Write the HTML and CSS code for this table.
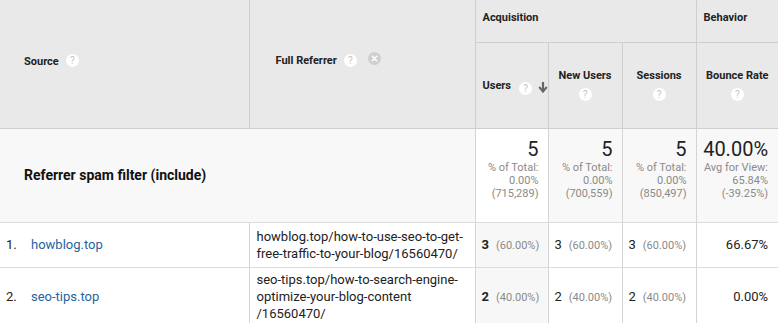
FILE: index.html
```html
<!DOCTYPE html>
<html>
<head>
<meta charset="utf-8">
<link rel="stylesheet" href="styles.css">
</head>
<body>
<table class="report">
  <colgroup>
    <col class="c-source">
    <col class="c-ref">
    <col class="c-users">
    <col class="c-new">
    <col class="c-sess">
    <col class="c-bounce">
  </colgroup>
  <thead>
    <tr class="group-row">
      <th class="dim" rowspan="2"><span class="hlabel">Source</span><span class="help">?</span></th>
      <th class="dim dim-ref" rowspan="2"><span class="hlabel">Full Referrer</span><span class="help">?</span><span class="remove"><svg width="13" height="13" viewBox="0 0 14 14"><circle cx="7" cy="7" r="7" fill="#cfcfcf"/><path d="M4.6 4.6 L9.4 9.4 M9.4 4.6 L4.6 9.4" stroke="#fff" stroke-width="1.6" stroke-linecap="round"/></svg></span></th>
      <th class="group" colspan="3">Acquisition</th>
      <th class="group">Behavior</th>
    </tr>
    <tr class="metric-row">
      <th class="metric sorted"><span class="inline"><span class="hlabel">Users</span><span class="help">?</span><svg class="arrow" width="10" height="12" viewBox="0 0 10 12"><path d="M5 1 V9.5" stroke="#666" stroke-width="2.2" fill="none"/><path d="M1.2 6 L5 10.6 L8.8 6" stroke="#666" stroke-width="2" fill="none" stroke-linejoin="miter"/></svg></span></th>
      <th class="metric"><div class="hlabel">New Users</div><span class="help">?</span></th>
      <th class="metric"><div class="hlabel">Sessions</div><span class="help">?</span></th>
      <th class="metric"><div class="hlabel">Bounce Rate</div><span class="help">?</span></th>
    </tr>
  </thead>
  <tbody>
    <tr class="summary">
      <td class="sum-label" colspan="2">Referrer spam filter (include)</td>
      <td class="sum sorted"><div class="big">5</div><div class="sub">% of Total:<br>0.00%<br>(715,289)</div></td>
      <td class="sum"><div class="big">5</div><div class="sub">% of Total:<br>0.00%<br>(700,559)</div></td>
      <td class="sum"><div class="big">5</div><div class="sub">% of Total:<br>0.00%<br>(850,497)</div></td>
      <td class="sum"><div class="big">40.00%</div><div class="sub">Avg for View:<br>65.84%<br>(-39.25%)</div></td>
    </tr>
    <tr class="data">
      <td class="src"><span class="idx">1.</span><a class="link">howblog.top</a></td>
      <td class="ref">howblog.top/how-to-use-seo-to-get-free-traffic-to-your-blog/16560470/</td>
      <td class="num sorted"><b>3</b><span class="pct">(60.00%)</span></td>
      <td class="num">3<span class="pct">(60.00%)</span></td>
      <td class="num">3<span class="pct">(60.00%)</span></td>
      <td class="rate">66.67%</td>
    </tr>
    <tr class="data">
      <td class="src"><span class="idx">2.</span><a class="link">seo-tips.top</a></td>
      <td class="ref">seo-tips.top/how-to-search-engine-optimize-your-blog-content<br>/16560470/</td>
      <td class="num sorted"><b>2</b><span class="pct">(40.00%)</span></td>
      <td class="num">2<span class="pct">(40.00%)</span></td>
      <td class="num">2<span class="pct">(40.00%)</span></td>
      <td class="rate">0.00%</td>
    </tr>
  </tbody>
</table>
</body>
</html>
```

FILE: styles.css
```css
html, body {
  margin: 0;
  padding: 0;
  background: #fff;
}
body {
  font-family: Roboto, "Liberation Sans", Arial, sans-serif;
  color: #222;
  overflow: hidden;
}
.report {
  border-collapse: collapse;
  table-layout: fixed;
  width: 778px;
}
.c-source { width: 249px; }
.c-ref { width: 226px; }
.c-users { width: 73px; }
.c-new { width: 74px; }
.c-sess { width: 74px; }
.c-bounce { width: 82px; }

th {
  background: #e9e9e9;
  font-size: 11px;
  font-weight: 700;
  color: #222;
  border: 1px solid #cfcfcf;
  padding: 0;
}
.group-row th { border-top: 0; }
.group-row th:last-child { border-right: 0; }
.metric-row th:last-child { border-right: 0; }
.dim { border-left: 0; }
.group-row { height: 42px; }
.metric-row { height: 86px; }
.dim {
  text-align: left;
  padding-left: 24px;
  vertical-align: middle;
  padding-bottom: 5px;
}
.dim-ref { padding-left: 26px; border-left: 1px solid #d4d4d4; }
.group {
  text-align: left;
  padding-left: 7px;
  vertical-align: middle;
  padding-bottom: 6px;
}
.metric {
  text-align: center;
  vertical-align: middle;
  padding: 0 2px 0;
}
.metric .hlabel { display: block; margin-bottom: 5px; }
.metric.sorted { text-align: left; padding-left: 7px; padding-top: 6px; }
.inline { display: inline-flex; align-items: center; }
.help {
  display: inline-block;
  width: 13px;
  height: 13px;
  line-height: 13px;
  border-radius: 50%;
  background: #fff;
  color: #c4c4c4;
  font-size: 10px;
  font-weight: 400;
  text-align: center;
  vertical-align: middle;
}
.dim .help { margin-left: 7px; margin-top: -2px; }
.metric.sorted .help { margin-left: 8px; }
.arrow { margin-left: 6px; margin-top: -3px; }
.remove {
  display: inline-block;
  vertical-align: middle;
  margin-left: 11px;
  position: relative;
  top: -3px;
}
.remove svg { display: block; }

td { padding: 0; }
.summary { height: 94px; background: #f8f8f8; }
.summary td {
  border-bottom: 1px solid #dcdcdc;
  border-right: 1px solid #d4d4d4;
  vertical-align: top;
}
.summary td:last-child, .data td:last-child { border-right: 0; }
.sum-label {
  font-size: 14px;
  font-weight: 700;
  padding-left: 24px !important;
  vertical-align: middle !important;
  color: #111;
}
.sum {
  text-align: right;
  padding: 9px 9px 0 0 !important;
}
.sum:last-child { padding-right: 10px !important; }
.sum.sorted { background: #fff; }
.big {
  font-size: 20px;
  line-height: 23px;
  color: #222;
}
.sub {
  font-size: 11px;
  line-height: 13px;
  color: #8a8a8a;
}
.data td {
  border-bottom: 1px solid #dcdcdc;
  border-right: 1px solid #d4d4d4;
  font-size: 13px;
  vertical-align: middle;
  color: #222;
}
.data { height: 45px; }
.data:last-child { height: 58px; }
.src { padding-left: 6px !important; }
.idx { display: inline-block; width: 25px; }
.link { color: #2465a0; text-decoration: none; }
.ref {
  padding: 2px 10px 1px 7px !important;
  line-height: 17px;
  word-break: break-word;
}
.num {
  padding-left: 6px !important;
  white-space: nowrap;
}
.num.sorted { background: #f7f7f7; }
.num b { font-weight: 700; }
.pct {
  font-size: 11px;
  color: #8a8a8a;
  margin-left: 7px;
}
.rate {
  text-align: right;
  padding-right: 10px !important;
}
```
